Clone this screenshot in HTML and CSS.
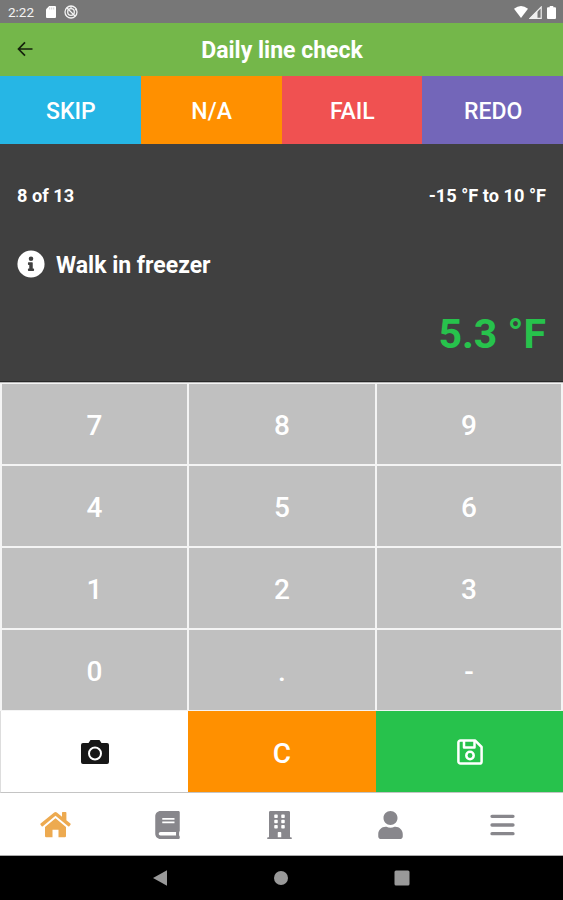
FILE: index.html
```html
<!DOCTYPE html>
<html lang="en">
<head>
<meta charset="utf-8">
<title>Daily line check</title>
<link rel="stylesheet" href="styles.css">
</head>
<body>
<div class="status">
  <span class="time">2:22</span>
  <svg class="sd" viewBox="0 0 10 12"><path d="M3.200 0H9a1 1 0 0 1 1 1v10a1 1 0 0 1-1 1H1a1 1 0 0 1-1-1V3.200z" fill="#fff"/><path d="M3.700 1.500v2M5.700 1.500v2M7.700 1.500v2" stroke="#bbb" stroke-width=".7"/></svg>
  <svg class="sync" viewBox="0 0 14 14" fill="none" stroke="#f4f4f4"><circle cx="7" cy="7" r="6" stroke-width="1.300"/><circle cx="7" cy="7" r="3.300" stroke-width="1.300"/><path d="M3 3l8 8M7 1v3M11 5l2-1" stroke-width="1.200"/></svg>
  <div class="signals">
    <svg width="14" height="12" viewBox="0 0 14 12"><path d="M0 2.700Q7-2.700 14 2.700L7 12z" fill="#fff"/></svg>
    <svg width="13" height="13" viewBox="0 0 13 13"><path d="M12.200 1v11.300H1z" fill="none" stroke="#eee" stroke-width="1.200"/><path d="M8.500 4.500v8H.5z" fill="#eee"/></svg>
    <svg class="battery" width="9" height="13" viewBox="0 0 9 13"><path d="M2.700 0h3.600v1.300H8a1 1 0 0 1 1 1V12a1 1 0 0 1-1 1H1a1 1 0 0 1-1-1V2.300a1 1 0 0 1 1-1h1.700z" fill="#fff"/></svg>
  </div>
</div>
<header class="header">
  <svg class="back" viewBox="0 0 16 16" fill="none" stroke="#15230c" stroke-width="1.700"><path d="M15.500 8H2M8 1.300L1.500 8 8 14.700"/></svg>
  <h1>Daily line check</h1>
</header>
<div class="actions">
  <button class="skip">SKIP</button>
  <button class="na">N/A</button>
  <button class="fail">FAIL</button>
  <button class="redo">REDO</button>
</div>
<main class="panel">
  <div class="meta"><span>8 of 13</span><span>-15 °F to 10 °F</span></div>
  <div class="item">
    <svg width="28" height="28" viewBox="0 0 512 512"><path fill="#fff" d="M256 8a248 248 0 1 0 0 496 248 248 0 0 0 0-496zm0 110a42 42 0 1 1 0 84 42 42 0 0 1 0-84zm56 254a12 12 0 0 1-12 12h-88a12 12 0 0 1-12-12v-24a12 12 0 0 1 12-12h12v-64h-12a12 12 0 0 1-12-12v-24a12 12 0 0 1 12-12h64a12 12 0 0 1 12 12v100h12a12 12 0 0 1 12 12z"/></svg>
    <span>Walk in freezer</span>
  </div>
  <div class="reading">5.3 °F</div>
</main>
<div class="keypad">
  <button>7</button><button>8</button><button>9</button>
  <button>4</button><button>5</button><button>6</button>
  <button>1</button><button>2</button><button>3</button>
  <button>0</button><button>.</button><button>-</button>
</div>
<div class="commands">
  <button class="camera"><svg width="28" height="24" viewBox="0 0 28 24"><path fill="#171717" d="M9.500 0h9l2 3H26a2 2 0 0 1 2 2v17a2 2 0 0 1-2 2H2a2 2 0 0 1-2-2V5a2 2 0 0 1 2-2h5.500z"/><circle cx="14" cy="13.500" r="6" fill="none" stroke="#fff" stroke-width="2"/></svg></button>
  <button class="clear">C</button>
  <button class="save"><svg width="26" height="26" viewBox="0 0 26 26" fill="none" stroke="#fff" stroke-width="2.500" stroke-linejoin="round"><path d="M3.500 1.400H18L24.600 8v14.500a2.100 2.100 0 0 1-2.100 2.100h-19a2.100 2.100 0 0 1-2.100-2.100v-19a2.100 2.100 0 0 1 2.100-2.100z"/><path d="M7 2v6.500h10.500V2"/><circle cx="13" cy="16.500" r="3.700"/></svg></button>
</div>
<nav class="tabs">
  <span><svg width="31" height="27" viewBox="0 0 31 27"><path fill="#edaa50" d="M15.500 7.200L26 16v9a1.200 1.200 0 0 1-1.200 1.200h-6.300v-7.500h-6v7.500H6.200A1.200 1.200 0 0 1 5 25v-9z"/><path fill="#edaa50" d="M14.200 1.500a2 2 0 0 1 2.600 0l5.200 4.300V1.700a.7.700 0 0 1 .7-.7h3a.7.700 0 0 1 .7.700v7.500l4 3.400a.8.800 0 0 1 .1 1.100l-1.200 1.500a.8.800 0 0 1-1.100.1L15.500 4.800 2.800 15.300a.8.800 0 0 1-1.100-.1L.5 13.700a.8.800 0 0 1 .1-1.100z"/></svg></span>
  <span><svg width="25" height="28" viewBox="0 0 448 512"><path fill="#88878c" d="M448 360V24c0-13.300-10.700-24-24-24H96C43 0 0 43 0 96v320c0 53 43 96 96 96h328c13.300 0 24-10.700 24-24v-16c0-7.500-3.500-14.300-8.900-18.700-4.200-15.400-4.200-59.300 0-74.700 5.400-4.300 8.900-11.100 8.900-18.600zM128 134c0-3.300 2.700-6 6-6h212c3.300 0 6 2.700 6 6v20c0 3.300-2.700 6-6 6H134c-3.300 0-6-2.700-6-6v-20zm0 64c0-3.300 2.700-6 6-6h212c3.300 0 6 2.700 6 6v20c0 3.300-2.700 6-6 6H134c-3.300 0-6-2.700-6-6v-20zm253.400 250H96c-17.700 0-32-14.300-32-32 0-17.600 14.400-32 32-32h285.400c-1.900 17.100-1.900 46.900 0 64z"/></svg></span>
  <span><svg width="25" height="28" viewBox="0 0 448 512"><path fill="#88878c" d="M436 480h-20V24c0-13.300-10.700-24-24-24H56C42.700 0 32 10.700 32 24v456H12c-6.600 0-12 5.400-12 12v20h448v-20c0-6.600-5.400-12-12-12zM128 76c0-6.600 5.400-12 12-12h40c6.600 0 12 5.400 12 12v40c0 6.600-5.400 12-12 12h-40c-6.600 0-12-5.400-12-12V76zm0 96c0-6.600 5.400-12 12-12h40c6.600 0 12 5.400 12 12v40c0 6.600-5.400 12-12 12h-40c-6.600 0-12-5.400-12-12v-40zm52 148h-40c-6.600 0-12-5.400-12-12v-40c0-6.600 5.400-12 12-12h40c6.600 0 12 5.400 12 12v40c0 6.600-5.400 12-12 12zm76 160h-64v-84c0-6.600 5.400-12 12-12h40c6.600 0 12 5.400 12 12v84zm64-172c0 6.600-5.400 12-12 12h-40c-6.600 0-12-5.400-12-12v-40c0-6.600 5.400-12 12-12h40c6.600 0 12 5.400 12 12v40zm0-96c0 6.600-5.400 12-12 12h-40c-6.600 0-12-5.400-12-12v-40c0-6.600 5.400-12 12-12h40c6.600 0 12 5.400 12 12v40zm0-96c0 6.600-5.400 12-12 12h-40c-6.600 0-12-5.400-12-12V76c0-6.600 5.400-12 12-12h40c6.600 0 12 5.400 12 12v40z"/></svg></span>
  <span><svg width="25" height="28" viewBox="0 0 448 512"><path fill="#88878c" d="M224 256c70.700 0 128-57.300 128-128S294.700 0 224 0 96 57.300 96 128s57.300 128 128 128zm89.600 32h-16.700c-22.200 10.200-46.900 16-72.900 16s-50.600-5.800-72.900-16h-16.700C60.200 288 0 348.200 0 422.400V464c0 26.500 21.500 48 48 48h352c26.500 0 48-21.500 48-48v-41.600c0-74.200-60.200-134.400-134.400-134.400z"/></svg></span>
  <span><svg width="25" height="28" viewBox="0 0 25 28"><path stroke="#88878c" stroke-width="3.300" stroke-linecap="round" d="M2 5.300h21M2 14h21M2 22.700h21"/></svg></span>
</nav>
<div class="system">
  <svg width="14" height="16" viewBox="0 0 14 16"><path fill="#999" d="M14 .3v15.400L0 8z"/></svg>
  <svg width="14" height="14" viewBox="0 0 14 14"><circle cx="7" cy="7" r="7" fill="#999"/></svg>
  <svg width="16" height="16" viewBox="0 0 16 16"><rect x=".5" y=".5" width="15" height="15" rx="1.500" fill="#999"/></svg>
</div>
</body>
</html>
```
FILE: styles.css
```css
* { box-sizing: border-box; }
body {
  margin: 0;
  width: 563px;
  height: 900px;
  display: flex;
  flex-direction: column;
  overflow: hidden;
  font-family: Roboto, "Liberation Sans", sans-serif;
  color: #fff;
  background: #000;
}
svg { display: block; flex: none; }
button {
  border: 0;
  padding: 0;
  margin: 0;
  font: inherit;
  color: inherit;
  background: none;
  display: flex;
  align-items: center;
  justify-content: center;
}
.status {
  height: 23px;
  flex: none;
  display: flex;
  align-items: center;
  padding: 1px 7px 0 8px;
  background: #777;
  font-size: 13.5px;
  color: #f4f4f4;
}
.time { width: 38px; }
.sd { width: 10px; height: 12px; }
.sync { width: 14px; height: 14px; margin-left: 8px; }
.signals { display: flex; align-items: center; gap: 1px; margin-left: auto; }
.battery { margin-left: 4px; }
.header {
  height: 53px;
  flex: none;
  display: grid;
  grid-template-columns: 32px 1fr 32px;
  align-items: center;
  background: #74b74a;
}
.back { width: 16px; height: 16px; margin-left: 17px; margin-top: -1px; }
.header h1 {
  margin: 2px 0 0 1px;
  text-align: center;
  font-size: 23px;
  font-weight: 700;
  line-height: 30px;
}
.actions {
  height: 68px;
  flex: none;
  display: grid;
  grid-template-columns: repeat(4, 1fr);
  font-size: 23px;
  font-weight: 500;
}
.actions button { padding: 2px 0 0 1px; }
.skip { background: #26b6e5; }
.na { background: #ff9000; }
.fail { background: #f05151; }
.redo { background: #7366b9; }
.panel {
  height: 238px;
  flex: none;
  padding: 40px 17px 0;
  background: #404040;
  border-bottom: 1px solid #282828;
  font-weight: 700;
}
.meta {
  display: flex;
  justify-content: space-between;
  font-size: 18.2px;
  line-height: 24px;
}
.item {
  display: flex;
  align-items: center;
  gap: 11px;
  margin-top: 41px;
  font-size: 23px;
  line-height: 30px;
}
.item svg { margin-top: -1px; }
.item span { padding-top: 2px; margin-bottom: -2px; }
.reading {
  margin-top: 30px;
  text-align: right;
  font-size: 41px;
  line-height: 50px;
  color: #27c24c;
}
.keypad {
  height: 329px;
  flex: none;
  display: grid;
  grid-template-columns: 185px 186px 184px;
  grid-template-rows: repeat(4, 80px);
  gap: 2px;
  padding: 2px;
  background: #f4f4f4;
  border-top: 1px solid #b8b8b8;
  padding-top: 1px;
  font-size: 28px;
  font-weight: 500;
}
.keypad button { background: #c0c0c0; padding-top: 3px; }
.commands {
  height: 82px;
  flex: none;
  display: grid;
  grid-template-columns: 188px 188px 187px;
  font-size: 28px;
  font-weight: 500;
}
.commands button { border-bottom: 1px solid #c4c4c4; }
.camera { background: #fff; border-left: 1px solid #ddd; }
.commands .camera { padding-top: 1px; }
.clear { background: #ff9000; padding-top: 3px; }
.save { background: #27c24c; }
.tabs {
  height: 63px;
  flex: none;
  display: grid;
  grid-template-columns: repeat(5, 111.7px);
  justify-items: center;
  align-items: center;
  padding-top: 1px;
  background: #fff;
  border-bottom: 1px solid #aaa;
}
.system {
  height: 44px;
  flex: none;
  display: flex;
  justify-content: space-between;
  align-items: center;
  padding: 0 153px;
}
```
